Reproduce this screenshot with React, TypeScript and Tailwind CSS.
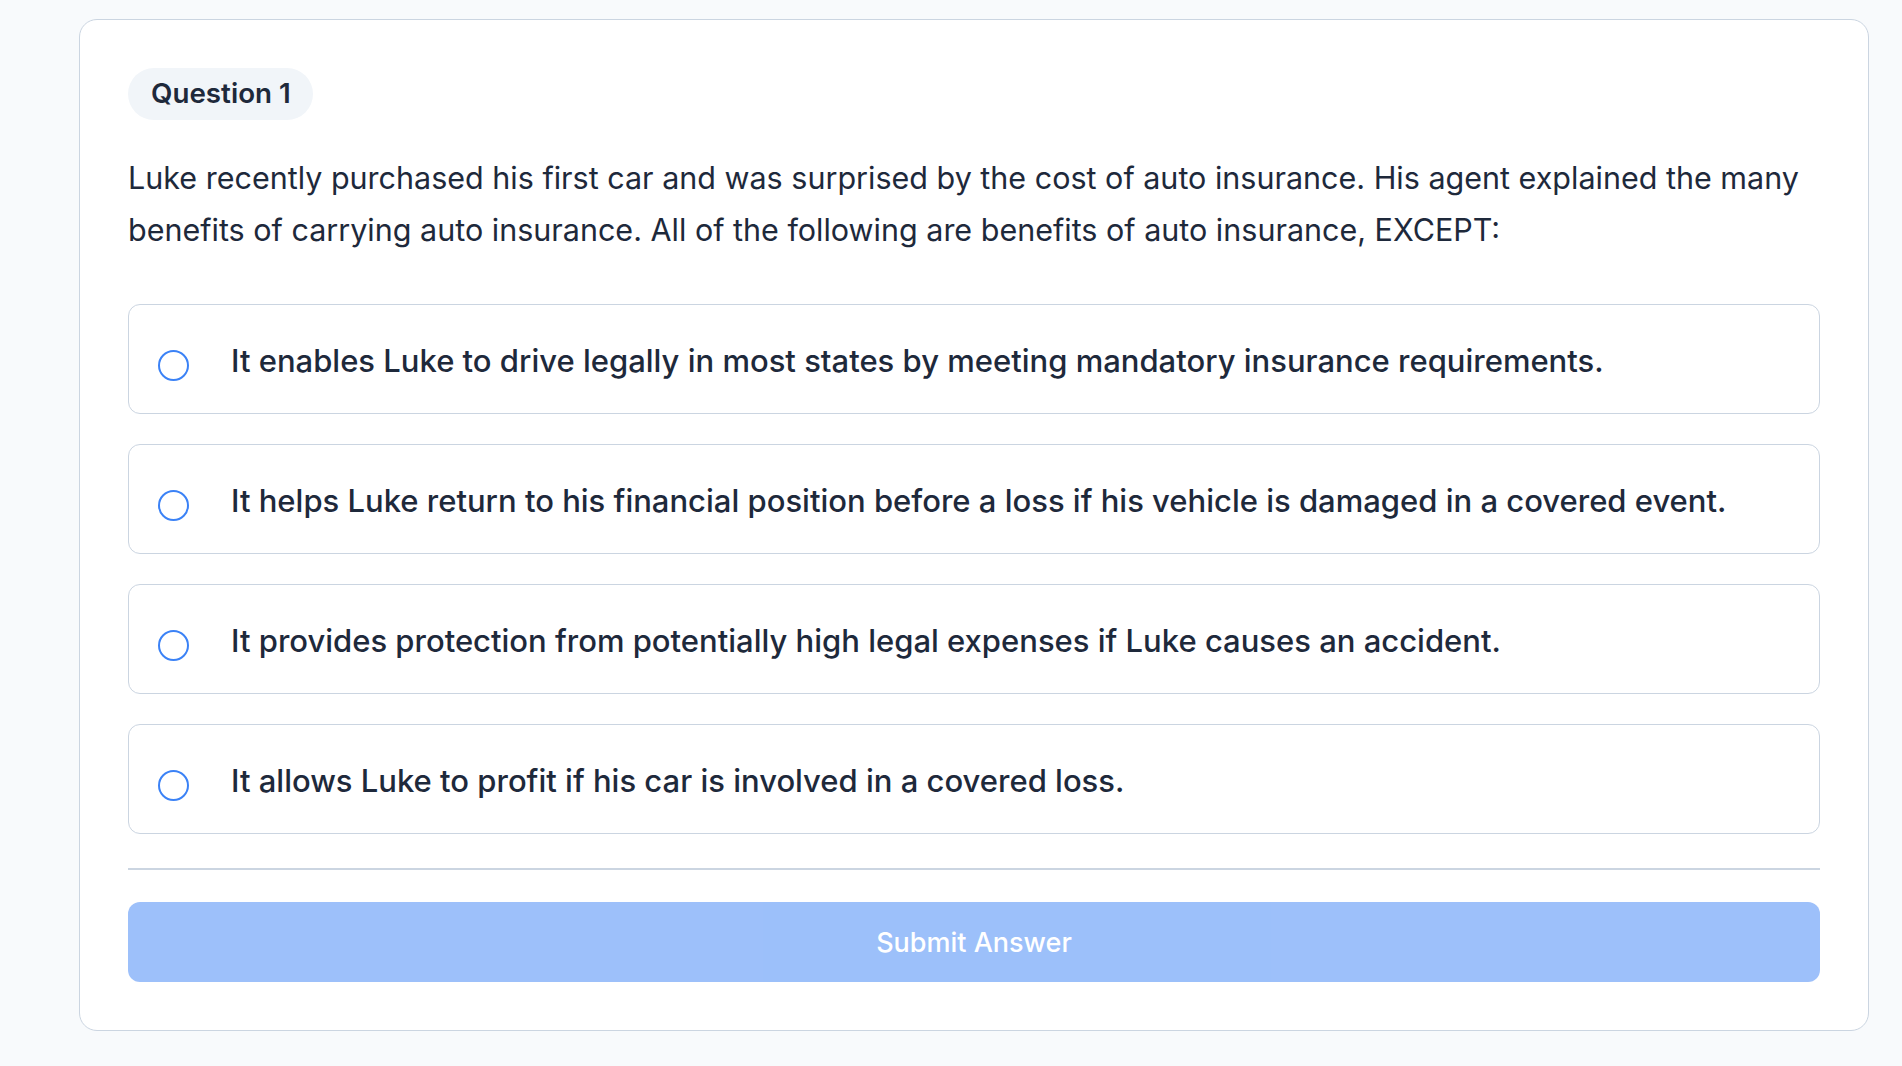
import React, { useState } from 'react';

const options = [
  'It enables Luke to drive legally in most states by meeting mandatory insurance requirements.',
  'It helps Luke return to his financial position before a loss if his vehicle is damaged in a covered event.',
  'It provides protection from potentially high legal expenses if Luke causes an accident.',
  'It allows Luke to profit if his car is involved in a covered loss.',
];

const App: React.FC = () => {
  const [selected, setSelected] = useState<number | null>(null);

  return (
    <div
      className="min-h-screen bg-[#f8fafc] pl-[79px] pr-[33px] pt-[19px] pb-[34px] text-[#1e293b]"
      style={{ fontFamily: 'Inter, "Noto Sans", sans-serif' }}
    >
      <div className="bg-white border-[1.5px] border-[#cbd5e1] rounded-[18px] p-[48px]">
        {/* Badge */}
        <div className="inline-flex items-center h-[52px] pl-[23px] pr-[22px] rounded-full bg-[#f1f5f9] text-[27.75px] font-semibold">
          Question 1
        </div>

        {/* Question */}
        <p className="mt-[32px] text-[30.5px] leading-[52px]">
          Luke recently purchased his first car and was surprised by the cost of auto insurance. His agent explained the many
          benefits of carrying auto insurance. All of the following are benefits of auto insurance, EXCEPT:
        </p>

        {/* Options */}
        <div className="mt-[48px] flex flex-col gap-[30px]">
          {options.map((opt, idx) => (
            <button
              key={idx}
              onClick={() => setSelected(idx)}
              className="h-[110px] flex items-center pl-[29px] pr-[28px] border-[1.5px] border-[#cbd5e1] rounded-[12px] bg-white text-left"
            >
              <span className="mt-[12px] w-[31px] h-[31px] shrink-0 rounded-full border-[2px] border-[#3b82f6] flex items-center justify-center">
                {selected === idx && <span className="w-[15px] h-[15px] rounded-full bg-[#3b82f6]" />}
              </span>
              <span className="ml-[42px] pt-[4px] text-[31px] font-medium leading-[42px]">{opt}</span>
            </button>
          ))}
        </div>

        <div className="mt-[34px] h-[1.5px] bg-[#cbd5e1]" />

        <button
          disabled={selected === null}
          className="mt-[32px] w-full h-[80px] pt-[3px] rounded-[12px] bg-[#3b82f6] disabled:opacity-50 text-white text-[27px] font-medium"
        >
          Submit Answer
        </button>
      </div>
    </div>
  );
};

export default App;
